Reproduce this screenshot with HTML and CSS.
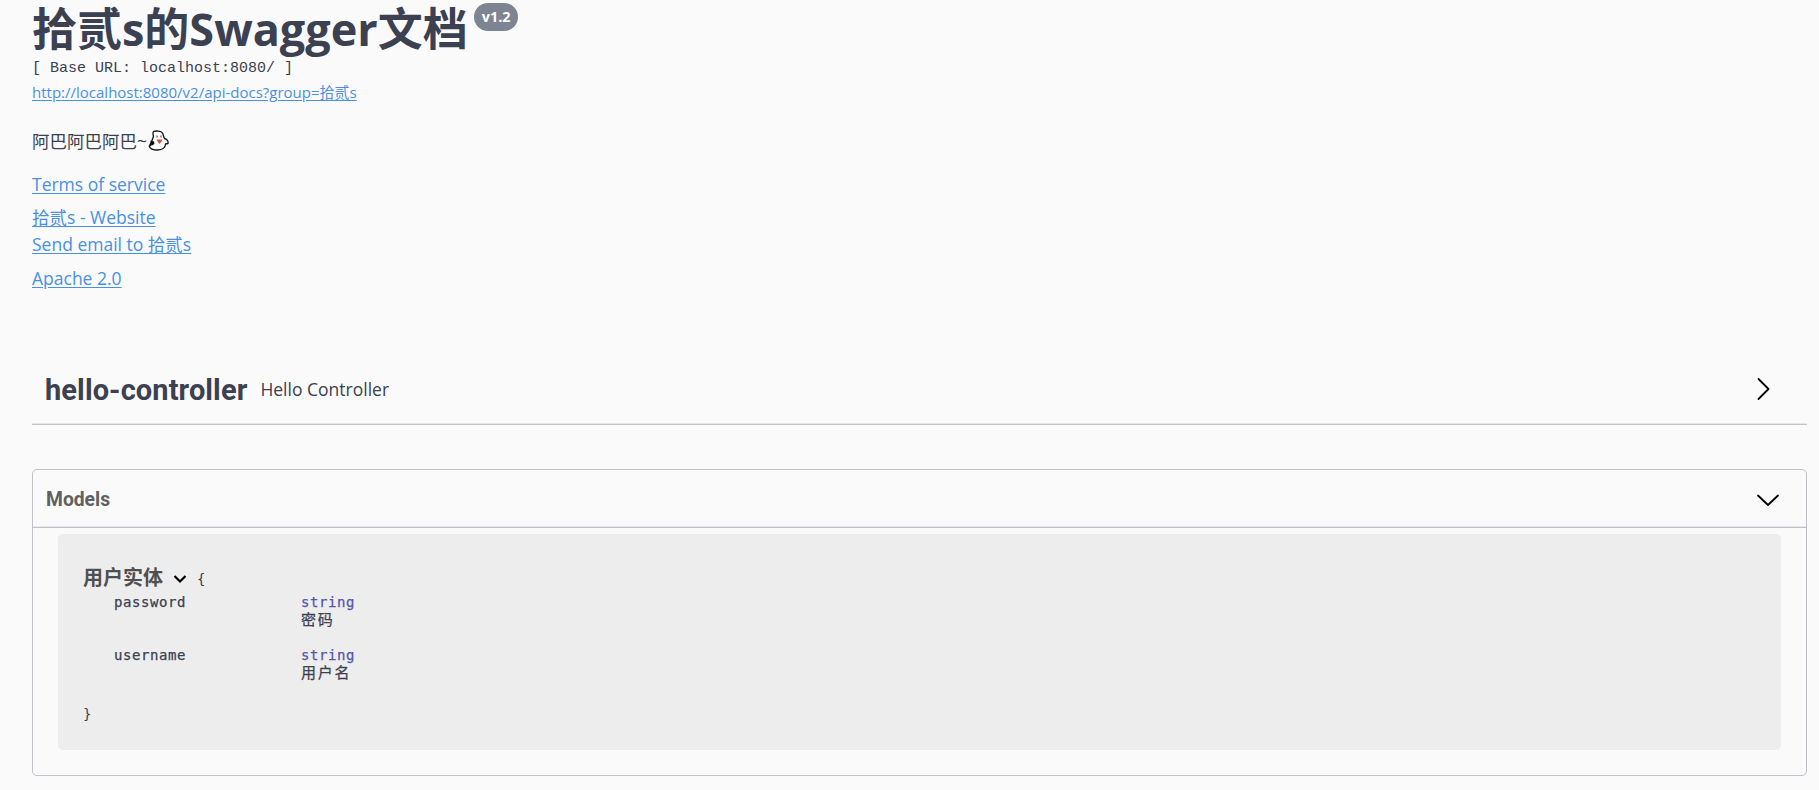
FILE: index.html
```html
<!DOCTYPE html>
<html lang="zh-CN">
<head>
  <meta charset="UTF-8">
  <meta name="viewport" content="width=device-width, initial-scale=1.0">
  <title>Swagger UI</title>
  <link rel="stylesheet" href="styles.css">
</head>
<body>
  <div class="wrapper">

    <header class="info">
      <h1 class="title"><span>拾贰s的Swagger文档</span><small class="version">v1.2</small></h1>
      <pre class="base-url">[ Base URL: localhost:8080/ ]</pre>
      <div class="docs-url"><a href="#">http://localhost:8080/v2/api-docs?group=拾贰s</a></div>

      <div class="description">
        <span>阿巴阿巴阿巴~</span>
        <svg class="ghost" viewBox="0 0 21 21" width="21" height="21">
          <path d="M4.500 9L5.500 6.500C5 4 4.500 2.500 5.500 1.500C8 .6 13 .8 14.500 3C15.500 5 15.500 7 16.500 8.500C19 9 20.500 11.500 20 13.500L17.500 14C17.500 17.500 14.500 20 9.500 20C5 20 2 18.500 1.200 16.200C2.500 16 3 14.500 3.500 12Z" fill="#fff" stroke="#111" stroke-width="1.300" stroke-linejoin="round"/>
          <path d="M2.500 10.500L6 11.500L6.500 14L4 15.500L1 14.500L2.500 13Z" fill="#111"/>
          <path d="M9 5.500V7.500M13 5.500V7.500" stroke="#333" stroke-width="1"/>
          <path d="M8.500 9.500H14.500L13 12L11.500 14L10 12Z" fill="#f0431f"/>
        </svg>
      </div>

      <div class="terms"><a href="#">Terms of service</a></div>
      <div class="website"><a href="#">拾贰s - Website</a></div>
      <div class="email"><a href="#">Send email to 拾贰s</a></div>
      <div class="license"><a href="#">Apache 2.0</a></div>
    </header>

    <section class="tag">
      <h3 class="tag-name">hello-controller</h3>
      <span class="tag-description">Hello Controller</span>
      <svg class="arrow" viewBox="0 0 24 24" width="24" height="24">
        <path d="M7.500 2L17.500 12L7.500 22"/>
      </svg>
    </section>

    <section class="models">
      <h4 class="models-header">
        <span>Models</span>
        <svg class="arrow" viewBox="0 0 24 24" width="24" height="24">
          <path d="M2 7.500L12 17L22 7.500"/>
        </svg>
      </h4>
      <div class="model-box">
        <div class="model-title">
          <span class="model-name">用户实体</span>
          <svg class="toggle" viewBox="0 0 14 10" width="14" height="10">
            <path d="M1.500 2L7 7.500L12.500 2"/>
          </svg>
          <span class="brace">{</span>
        </div>
        <div class="property">
          <span>password</span>
          <div>
            <div class="prop-type">string</div>
            <div class="prop-text">密码</div>
          </div>
        </div>
        <div class="property">
          <span>username</span>
          <div>
            <div class="prop-type">string</div>
            <div class="prop-text">用户名</div>
          </div>
        </div>
        <div class="brace-end">}</div>
      </div>
    </section>

  </div>
</body>
</html>
```
FILE: styles.css
```css
* {
  box-sizing: border-box;
}

body {
  margin: 0;
  background: #fafafa;
  color: #3b4151;
  font-family: "Open Sans", "Noto Sans CJK SC", sans-serif;
  font-size: 17.5px;
}

h1, h3, h4, pre {
  margin: 0;
}

a {
  color: #4990e2;
  text-underline-offset: 2px;
}

.wrapper {
  padding: 0 12px 0 32px;
}

.info {
  height: 354px;
}

.title {
  display: flex;
  align-items: flex-start;
  height: 58px;
  font-size: 45px;
  line-height: 58px;
  white-space: nowrap;
}

.version {
  margin: 3px 0 0 6px;
  padding: 0 8px;
  height: 28px;
  border-radius: 14px;
  background: #7d8492;
  color: #fff;
  font-size: 14.4px;
  line-height: 28px;
}

.base-url {
  height: 22px;
  font-family: "Liberation Mono", monospace;
  font-size: 15px;
  line-height: 22px;
}

.docs-url {
  height: 24px;
  font-size: 15px;
  line-height: 24px;
}

.description {
  display: flex;
  align-items: center;
  height: 24px;
  margin-top: 24px;
}

.ghost {
  margin-left: 1px;
}

.terms, .website, .email, .license {
  height: 24px;
  line-height: 24px;
}

.terms {
  margin-top: 20px;
}

.website {
  margin-top: 9px;
}

.email {
  margin-top: 3px;
}

.license {
  margin-top: 10px;
}

.tag {
  display: flex;
  align-items: center;
  height: 71px;
  padding: 0 32px 0 13px;
  border-bottom: 1px solid #c1c3c8;
  box-shadow: inset 0 -1px #e8e8eb;
}

.tag-name {
  padding-top: 2px;
  font-family: Roboto, sans-serif;
  font-size: 29px;
  letter-spacing: 0.1px;
}

.tag-description {
  margin-left: 13px;
}

.arrow {
  margin-left: auto;
  fill: none;
  stroke: #000;
  stroke-width: 1.8;
  stroke-linecap: round;
  stroke-linejoin: round;
}

.models {
  height: 307px;
  margin-top: 44px;
  border: 1px solid #c1c2c8;
  border-radius: 5px;
}

.models-header {
  display: flex;
  align-items: center;
  height: 58px;
  padding: 2px 26px 0 13px;
  border-bottom: 1px solid #c1c2c8;
  box-shadow: inset 0 -1px #e8e8eb;
  color: #606060;
  font-family: Roboto, sans-serif;
  font-size: 19.3px;
}

.model-box {
  height: 216px;
  margin: 6px 25px 0;
  padding: 30px 25px;
  border-radius: 5px;
  background: #ededed;
  font-family: "DejaVu Sans Mono", "Noto Sans CJK SC", monospace;
  font-size: 14px;
  line-height: 18px;
}

.model-title {
  display: flex;
  align-items: center;
  height: 29px;
  padding-bottom: 4px;
}

.model-name {
  color: #505050;
  font-family: "Noto Sans CJK SC", sans-serif;
  font-size: 20px;
  font-weight: bold;
}

.toggle {
  margin: 4px 10px 0;
  fill: none;
  stroke: #000;
  stroke-width: 2.2;
}

.brace {
  padding-top: 5px;
}

.property {
  display: grid;
  grid-template-columns: 187px 1fr;
  height: 53px;
  padding-left: 31px;
  letter-spacing: 0.57px;
  -webkit-text-stroke: 0.25px;
}

.prop-type {
  color: #5555aa;
}

.prop-text {
  font-size: 15px;
  letter-spacing: 1.8px;
}

.brace-end {
  margin-top: 6px;
}
```
